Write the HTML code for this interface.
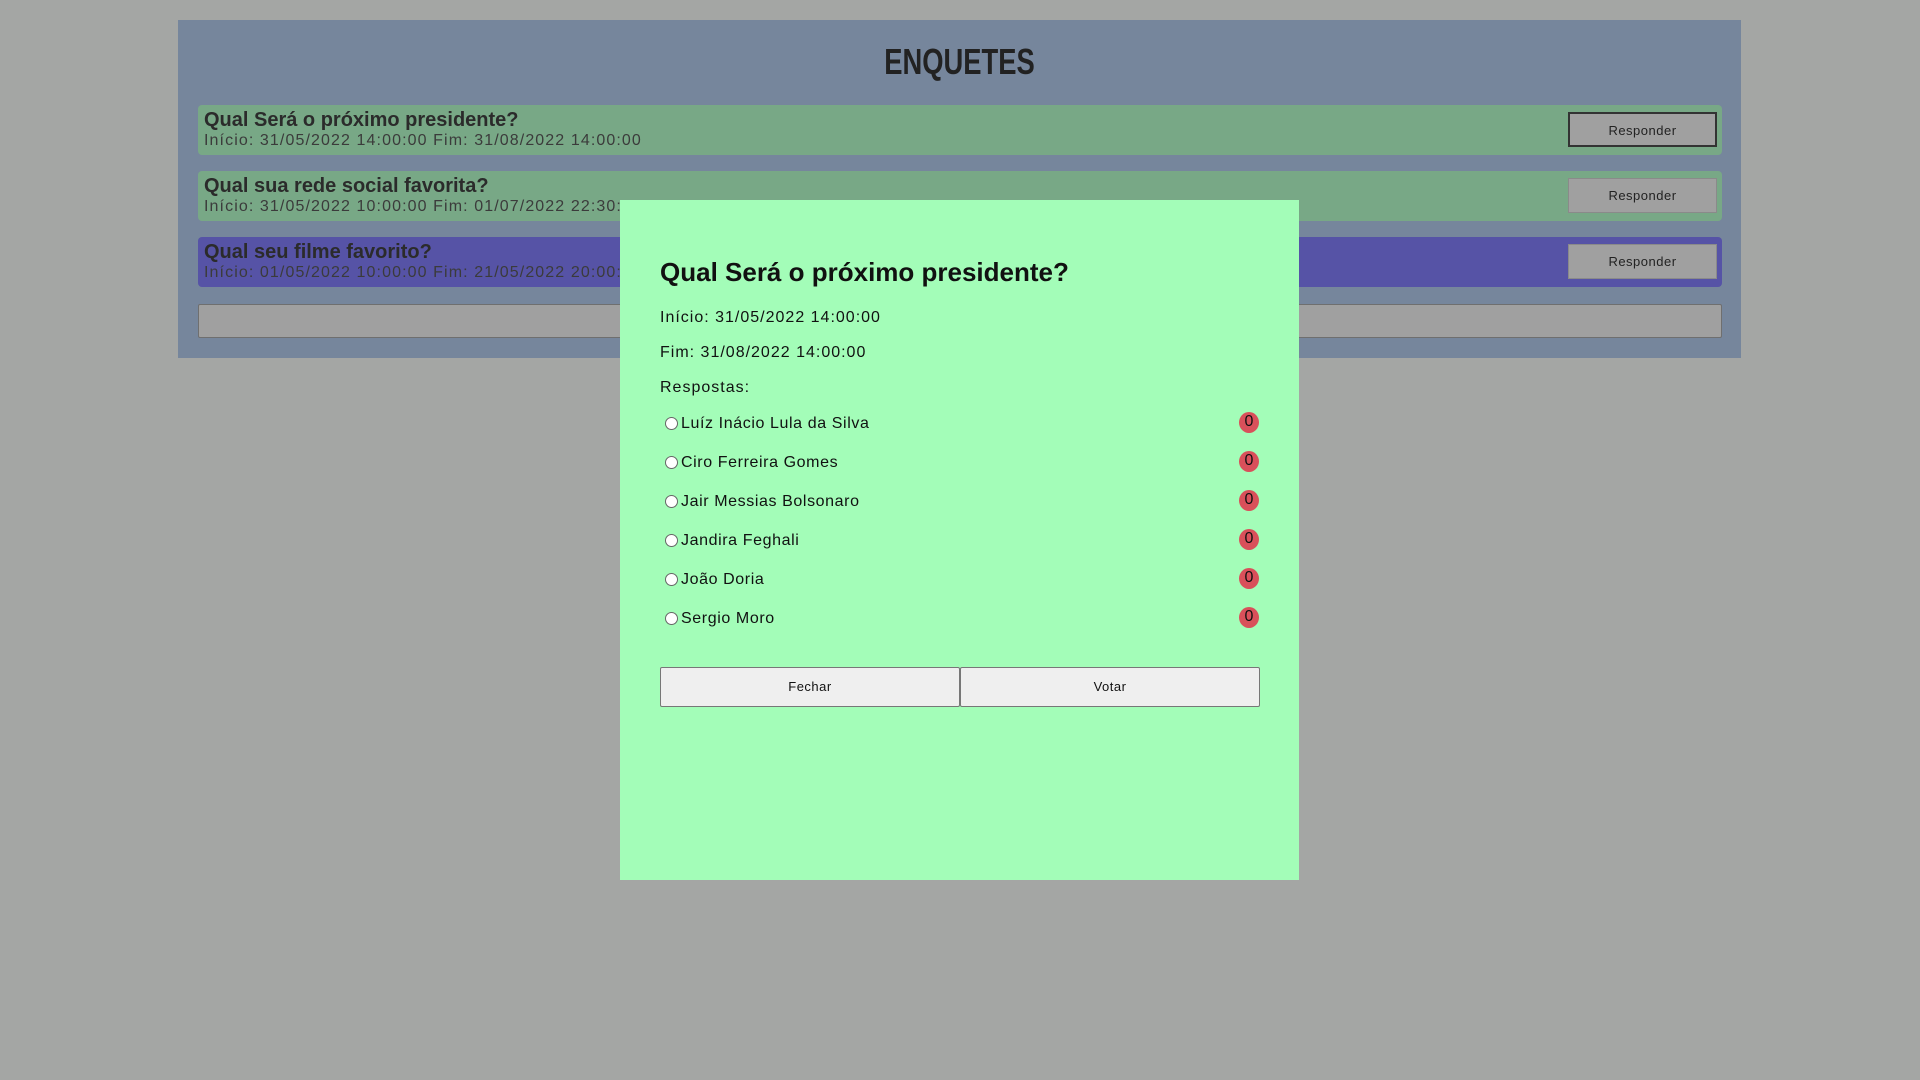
<!DOCTYPE html>
<html><head><meta charset="utf-8"><style>
*{box-sizing:border-box;margin:0;padding:0}
body{width:1920px;height:1080px;background:#a4a6a4;font-family:"Liberation Sans",sans-serif;position:relative;overflow:hidden}
.panel{position:absolute;left:178px;top:20px;width:1563px;height:338px;background:#76869c}
h1{position:absolute;left:0;right:0;top:21px;text-align:center;font-size:36px;font-weight:bold;color:#222;font-family:"Liberation Sans Narrow","Liberation Sans",sans-serif;transform:scaleX(0.76);letter-spacing:0px}
.row{position:absolute;left:20px;width:1524px;height:50px;border-radius:4px;background:#78a886;color:#2b2b2b}
.row .t{position:absolute;left:6px;top:4px;font-size:20px;font-weight:bold;white-space:nowrap;letter-spacing:0}
.row .d{position:absolute;left:6px;top:27px;font-size:16px;color:#3b3b3b;white-space:nowrap;letter-spacing:1.1px}
.row .b{position:absolute;right:5px;top:7px;width:149px;height:35px;background:#a0a0a0;border:1px solid #8a8a8a;font-size:13px;color:#222;text-align:center;line-height:33px;letter-spacing:.5px}
.bar{position:absolute;left:20px;top:284px;width:1524px;height:34px;background:#a0a0a0;border:1px solid #6f6f6f;border-radius:2px}
.modal{position:absolute;left:620px;top:200px;width:679px;height:680px;background:#a3fdb8;color:#111}
.modal h2{position:absolute;left:40px;top:57px;font-size:26px;font-weight:bold;white-space:nowrap;letter-spacing:0}
.modal .p{position:absolute;left:40px;font-size:16px;white-space:nowrap;letter-spacing:1px}
.opt{position:absolute;left:44px;width:595px;height:24px}
.opt .r{position:absolute;left:1px;top:5px;width:13px;height:13px;border-radius:50%;border:1px solid #666;background:#fff}
.opt .l{position:absolute;left:17px;top:3px;font-size:16px;letter-spacing:.6px;white-space:nowrap}
.opt .c{position:absolute;right:0;top:0;width:20px;height:21px;border-radius:50%;background:#d9505a;font-size:16px;text-align:center;line-height:20px;color:#111}
.btn{position:absolute;top:467px;width:300px;height:40px;background:#efefef;border:1px solid #777;border-radius:2px;font-size:13px;text-align:center;line-height:38px;color:#111;letter-spacing:.5px}
</style></head><body>
<div class="panel">
<h1>ENQUETES</h1>
<div class="row" style="top:85px"><div class="t">Qual Será o próximo presidente?</div><div class="d">Início: 31/05/2022 14:00:00 Fim: 31/08/2022 14:00:00</div><div class="b" style="border:2px solid #333">Responder</div></div>
<div class="row" style="top:151px"><div class="t">Qual sua rede social favorita?</div><div class="d">Início: 31/05/2022 10:00:00 Fim: 01/07/2022 22:30:00</div><div class="b">Responder</div></div>
<div class="row" style="top:217px;background:#5653a6"><div class="t">Qual seu filme favorito?</div><div class="d">Início: 01/05/2022 10:00:00 Fim: 21/05/2022 20:00:00</div><div class="b">Responder</div></div>
<div class="bar"></div>
</div>
<div class="modal">
<h2>Qual Será o próximo presidente?</h2>
<div class="p" style="top:109px">Início: 31/05/2022 14:00:00</div>
<div class="p" style="top:144px">Fim: 31/08/2022 14:00:00</div>
<div class="p" style="top:179px">Respostas:</div>
<div class="opt" style="top:212px"><div class="r"></div><div class="l">Luíz Inácio Lula da Silva</div><div class="c">0</div></div>
<div class="opt" style="top:251px"><div class="r"></div><div class="l">Ciro Ferreira Gomes</div><div class="c">0</div></div>
<div class="opt" style="top:290px"><div class="r"></div><div class="l">Jair Messias Bolsonaro</div><div class="c">0</div></div>
<div class="opt" style="top:329px"><div class="r"></div><div class="l">Jandira Feghali</div><div class="c">0</div></div>
<div class="opt" style="top:368px"><div class="r"></div><div class="l">João Doria</div><div class="c">0</div></div>
<div class="opt" style="top:407px"><div class="r"></div><div class="l">Sergio Moro</div><div class="c">0</div></div>
<div class="btn" style="left:40px">Fechar</div>
<div class="btn" style="left:340px">Votar</div>
</div>
</body></html>
